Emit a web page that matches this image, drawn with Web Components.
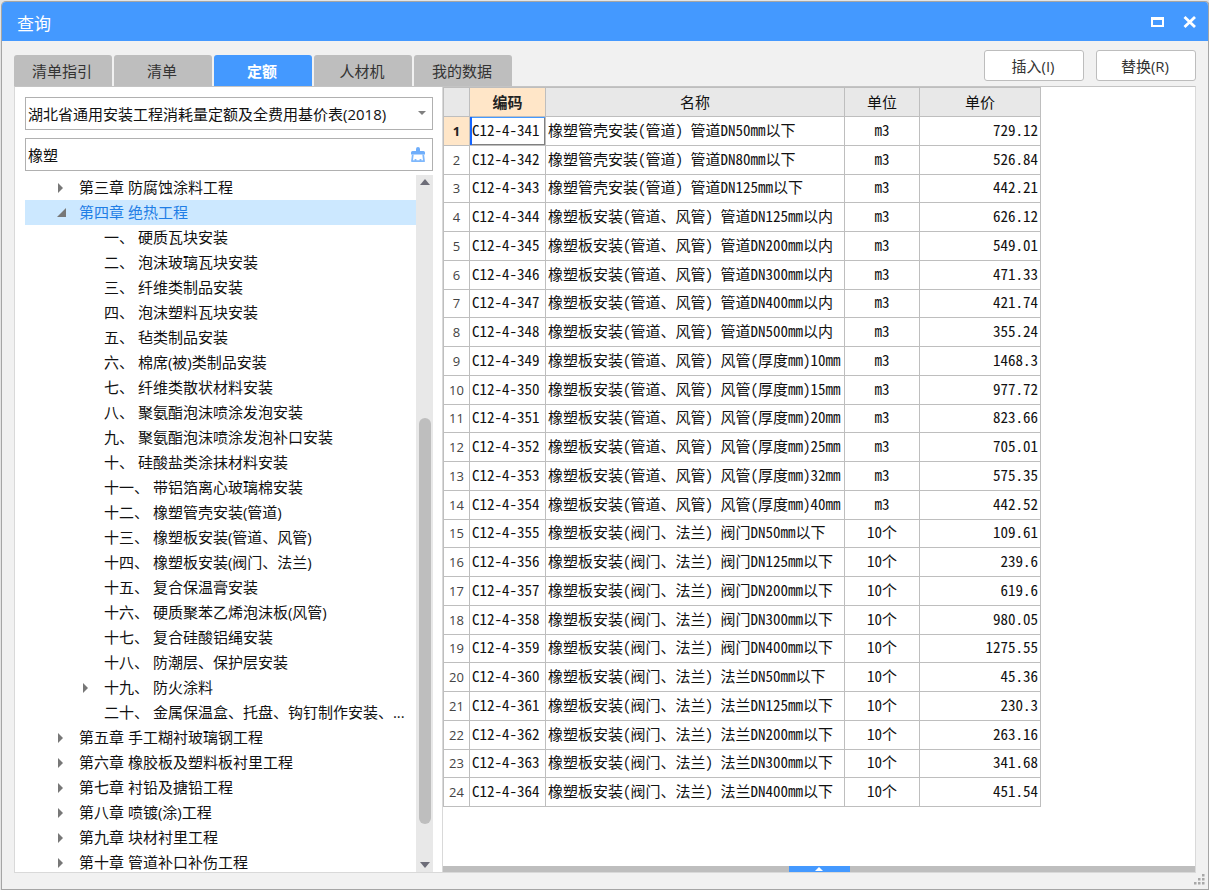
<!DOCTYPE html>
<html lang="zh-CN">
<head>
<meta charset="utf-8">
<title>查询</title>
<style>
html, body { height: 100%; }
body {
  margin: 0;
  background: #e4e4e4;
  color: #111;
  font: 15px/24px "Open Sans", "Noto Sans CJK SC", sans-serif;
}
</style>
</head>
<body>
<query-window></query-window>

<template id="query-window">
  <style>
    :host { display: flex; height: 100vh; padding: 2px 0 0 2px; box-sizing: border-box; }
    .frame {
      flex: 1; min-width: 0; display: flex; flex-direction: column;
      background: #f1f1f1; border-radius: 4px 4px 0 0; overflow: hidden;
      border: solid #a5a5a5; border-width: 0 1px 1px 0;
      box-shadow: 0 0 0 1px #a5a5a5;
    }
    .bar { display: flex; align-items: flex-end; justify-content: space-between; padding: 9px 12px 0 12px; }
    .actions { display: flex; gap: 12px; padding-bottom: 5px; }
    .panes {
      flex: 1; min-height: 0; display: flex; margin: 0 12px 16px;
      background: #fff; border: 1px solid #d9d9d9; border-top-color: #c4c4c4;
    }
    quota-side { flex: 0 0 427px; }
    .main { flex: 1; min-width: 0; display: flex; flex-direction: column; border-left: 1px solid #d9d9d9; }
    quota-table { flex: 1; min-height: 0; }
    .grip { position: absolute; right: 4px; bottom: 5px; }
  </style>
  <div class="frame">
    <title-bar>查询</title-bar>
    <div class="bar">
      <tab-strip></tab-strip>
      <div class="actions">
        <action-button>插入(I)</action-button>
        <action-button>替换(R)</action-button>
      </div>
    </div>
    <div class="panes">
      <quota-side></quota-side>
      <div class="main">
        <quota-table></quota-table>
        <pane-splitter></pane-splitter>
      </div>
    </div>
    <svg class="grip" width="11" height="11" viewBox="0 0 11 11" fill="#a8a8a8" aria-hidden="true">
      <path d="M8 0h2.500v2.500h-2.500zM4 4h2.500v2.500h-2.500zM8 4h2.500v2.500h-2.500zM0 8h2.500v2.500h-2.500zM4 8h2.500v2.500h-2.500zM8 8h2.500v2.500h-2.500z"/>
    </svg>
  </div>
</template>

<template id="title-bar">
  <style>
    :host { display: flex; align-items: center; justify-content: space-between; height: 39px; padding: 0 11px 0 15px; background: #4499ff; color: #fff; }
    h1 { margin: 0; padding-top: 5px; font-size: 17px; line-height: 24px; font-weight: 400; }
    div { display: flex; gap: 18px; }
    button { display: flex; padding: 0; border: 0; background: none; }
  </style>
  <h1><slot></slot></h1>
  <div>
    <button aria-label="最大化"><svg width="15" height="14" viewBox="0 0 15 14" fill="none" stroke="#fff"><path stroke-width="3" d="M1 3.500h13"/><path stroke-width="2" d="M2 3.500v7.500h11v-7.500"/></svg></button>
    <button aria-label="关闭"><svg width="14" height="14" viewBox="0 0 14 14" fill="none" stroke="#fff" stroke-width="2.800"><path d="M1.500 2l10.500 10M12 2L1.500 12"/></svg></button>
  </div>
</template>

<template id="tab-strip">
  <style>
    :host { display: flex; gap: 2px; }
    button {
      width: 98px; height: 31px; padding: 0 2px 0 0; border: 0; border-radius: 3px 3px 0 0;
      background: #bebebe; color: #333; font: inherit; line-height: 30px;
    }
    button[aria-selected=true] { background: #4499ff; color: #fff; font-weight: 700; }
  </style>
  <button role="tab">清单指引</button>
  <button role="tab">清单</button>
  <button role="tab" aria-selected="true">定额</button>
  <button role="tab">人材机</button>
  <button role="tab">我的数据</button>
</template>

<template id="action-button">
  <style>
    :host { display: block; }
    button {
      width: 100px; height: 31px; padding: 0 2px 0 0; border: 1px solid #bdbdbd; border-radius: 3px;
      background: #fff; color: #333; font: inherit; line-height: 28px;
    }
  </style>
  <button><slot></slot></button>
</template>

<template id="quota-side">
  <style>
    :host { display: flex; flex-direction: column; box-sizing: border-box; padding: 10px 9px 0 10px; }
    .field { display: flex; align-items: center; flex: none; height: 33px; margin-bottom: 8px; box-sizing: border-box; border: 1px solid #b0b0b0; }
    .field.search { margin-bottom: 4px; }
    select, input {
      flex: 1; min-width: 0; height: 31px; padding: 0 2px; border: 0; outline: 0; margin: 0;
      background: none; color: #111; font: inherit; appearance: none;
    }
    .field svg { flex: none; }
    .search button { display: flex; padding: 0; margin-right: 6px; border: 0; background: none; }
    .arrow { margin-right: 6px; }
    .body { flex: 1; min-height: 0; display: flex; }
    quota-tree { flex: 1; min-width: 0; }
  </style>
  <div class="field">
    <select aria-label="定额库"><option>湖北省通用安装工程消耗量定额及全费用基价表(2018)</option></select>
    <svg class="arrow" width="8" height="5" viewBox="0 0 8 5" fill="#808080"><path d="M0 0h8L4 4z"/></svg>
  </div>
  <div class="field search">
    <input aria-label="搜索" value="橡塑">
    <button aria-label="清空">
      <svg width="16" height="17" viewBox="0 0 16 17">
        <path fill="#6faefb" d="M6 3a2 2 0 0 1 4 0v2h3.500a1.500 1.500 0 0 1 1.500 1.500V8.500H1V6.500A1.500 1.500 0 0 1 2.500 5H6z"/>
        <path fill="none" stroke="#7fb8fc" stroke-width="1.800" stroke-linejoin="round" d="M2.800 8.500L2 15.200H14L13.200 8.500M5.500 15V13M10.500 15V13"/>
      </svg>
    </button>
  </div>
  <div class="body">
    <quota-tree></quota-tree>
    <scroll-rail></scroll-rail>
  </div>
</template>

<template id="quota-tree">
  <style>
    :host { display: block; overflow: hidden; }
    ul { margin: 0; padding: 0; list-style: none; }
    li { display: flex; align-items: center; height: 25px; padding: 0 8px 0 32px; }
    li.sub { padding-left: 57px; }
    li.on { background: #cce8ff; color: #1f7ee6; }
    i { flex: none; display: flex; width: 22px; }
    span { min-width: 0; overflow: hidden; text-overflow: ellipsis; white-space: nowrap; line-height: 25px; }
  </style>
  <ul role="tree"></ul>
</template>

<template id="scroll-rail">
  <style>
    :host { display: flex; flex-direction: column; align-items: center; width: 17px; background: #e8e8e8; }
    svg { flex: none; margin: 4px 0; }
    .track { flex: 1; display: flex; flex-direction: column; justify-content: flex-end; padding-bottom: 34px; }
    .thumb { width: 12px; height: 64%; border-radius: 6px; background: #bebebe; }
  </style>
  <svg width="10" height="6" viewBox="0 0 10 6" fill="#6d6d78"><path d="M0 6L5 0l5 6z"/></svg>
  <div class="track"><div class="thumb"></div></div>
  <svg width="10" height="6" viewBox="0 0 10 6" fill="#6d6d78"><path d="M0 0h10L5 6z"/></svg>
</template>

<template id="quota-table">
  <style>
    :host { display: block; overflow: hidden; }
    table {
      width: 598px; height: 720px; table-layout: fixed; border-collapse: collapse;
      font-family: "Noto Sans Mono CJK SC", "Noto Sans CJK SC", sans-serif; font-feature-settings: "hwid";
      line-height: 20px; color: #111;
    }
    thead tr { height: 29px; }
    th, td { padding: 0 2px; border: 1px solid #bebebe; white-space: nowrap; font-weight: 400; text-align: center; }
    td { padding-bottom: 2px; }
    thead th { background: #e8e8e8; }
    thead th.on, tbody th.on { background: #ffe6c8; font-weight: 700; color: #222; }
    tbody th { font-family: "Open Sans", sans-serif; font-size: 13px; color: #444; }
    td.code, td.name { text-align: left; }
    td.price { text-align: right; }
    td.active { box-shadow: inset 2px 0 #1464ff, inset 0 1px #4499ff, inset -1px -1px #808080; }
    col.no { width: 26px; } col.code { width: 76px; } col.nm { width: 299px; } col.unit { width: 75px; }
  </style>
  <table>
    <colgroup><col class="no"><col class="code"><col class="nm"><col class="unit"><col></colgroup>
    <thead><tr><th></th><th class="on">编码</th><th>名称</th><th>单位</th><th>单价</th></tr></thead>
    <tbody></tbody>
  </table>
</template>

<template id="pane-splitter">
  <style>
    :host { display: flex; justify-content: center; height: 6px; background: #bebebe; }
    button { display: flex; align-items: center; justify-content: center; width: 61px; height: 6px; padding: 0; border: 0; background: #4499ff; }
  </style>
  <button aria-label="展开"><svg width="8" height="4" viewBox="0 0 8 4" fill="#fff"><path d="M0 4L4 0l4 4z"/></svg></button>
</template>

<script>
class Base extends HTMLElement {
  constructor() {
    super();
    this.attachShadow({ mode: "open" })
      .append(document.getElementById(this.localName).content.cloneNode(true));
  }
}

const CLOSED = '<svg width="6" height="10" viewBox="0 0 6 10" fill="#777"><path d="M1 0l5 5-5 5z"/></svg>';
const OPEN = '<svg width="9" height="9" viewBox="0 0 9 9" fill="#777"><path d="M9 0v9H0z"/></svg>';
const nodes = [
  [0, "第三章 防腐蚀涂料工程", CLOSED],
  [0, "第四章 绝热工程", OPEN],
  ...["一、 硬质瓦块安装", "二、 泡沫玻璃瓦块安装", "三、 纤维类制品安装", "四、 泡沫塑料瓦块安装",
    "五、 毡类制品安装", "六、 棉席(被)类制品安装", "七、 纤维类散状材料安装", "八、 聚氨酯泡沫喷涂发泡安装",
    "九、 聚氨酯泡沫喷涂发泡补口安装", "十、 硅酸盐类涂抹材料安装", "十一、 带铝箔离心玻璃棉安装",
    "十二、 橡塑管壳安装(管道)", "十三、 橡塑板安装(管道、风管)", "十四、 橡塑板安装(阀门、法兰)",
    "十五、 复合保温膏安装", "十六、 硬质聚苯乙烯泡沫板(风管)", "十七、 复合硅酸铝绳安装",
    "十八、 防潮层、保护层安装"].map(t => [1, t, ""]),
  [1, "十九、 防火涂料", CLOSED],
  [1, "二十、 金属保温盒、托盘、钩钉制作安装、...", ""],
  ...["第五章 手工糊衬玻璃钢工程", "第六章 橡胶板及塑料板衬里工程", "第七章 衬铅及搪铅工程",
    "第八章 喷镀(涂)工程", "第九章 块材衬里工程", "第十章 管道补口补伤工程"].map(t => [0, t, CLOSED]),
];

class QuotaTree extends Base {
  connectedCallback() {
    this.shadowRoot.querySelector("ul").innerHTML = nodes.map(([level, text, mark]) =>
      `<li role="treeitem" class="${level ? "sub" : ""} ${mark === OPEN ? "on" : ""}"><i>${mark}</i><span>${text}</span></li>`).join("");
  }
}

const pipe = "橡塑管壳安装(管道) 管道", duct = "橡塑板安装(管道、风管) ", valve = "橡塑板安装(阀门、法兰) ";
const rows = [
  [pipe + "DN50mm以下", "729.12"], [pipe + "DN80mm以下", "526.84"], [pipe + "DN125mm以下", "442.21"],
  [duct + "管道DN125mm以内", "626.12"], [duct + "管道DN200mm以内", "549.01"], [duct + "管道DN300mm以内", "471.33"],
  [duct + "管道DN400mm以内", "421.74"], [duct + "管道DN500mm以内", "355.24"],
  [duct + "风管(厚度mm)10mm", "1468.3"], [duct + "风管(厚度mm)15mm", "977.72"], [duct + "风管(厚度mm)20mm", "823.66"],
  [duct + "风管(厚度mm)25mm", "705.01"], [duct + "风管(厚度mm)32mm", "575.35"], [duct + "风管(厚度mm)40mm", "442.52"],
  [valve + "阀门DN50mm以下", "109.61"], [valve + "阀门DN125mm以下", "239.6"], [valve + "阀门DN200mm以下", "619.6"],
  [valve + "阀门DN300mm以下", "980.05"], [valve + "阀门DN400mm以下", "1275.55"],
  [valve + "法兰DN50mm以下", "45.36"], [valve + "法兰DN125mm以下", "230.3"], [valve + "法兰DN200mm以下", "263.16"],
  [valve + "法兰DN300mm以下", "341.68"], [valve + "法兰DN400mm以下", "451.54"],
];

class QuotaTable extends Base {
  connectedCallback() {
    this.shadowRoot.querySelector("tbody").innerHTML = rows.map(([name, price], i) =>
      `<tr><th class="${i ? "" : "on"}">${i + 1}</th><td class="code ${i ? "" : "active"}">C12-4-${341 + i}</td>` +
      `<td class="name">${name}</td><td>${i < 14 ? "m3" : "10个"}</td><td class="price">${price}</td></tr>`).join("");
  }
}

for (const name of ["title-bar", "tab-strip", "action-button", "scroll-rail", "pane-splitter"])
  customElements.define(name, class extends Base {});
customElements.define("quota-tree", QuotaTree);
customElements.define("quota-table", QuotaTable);
customElements.define("quota-side", class extends Base {});
customElements.define("query-window", class extends Base {});
</script>
</body>
</html>
